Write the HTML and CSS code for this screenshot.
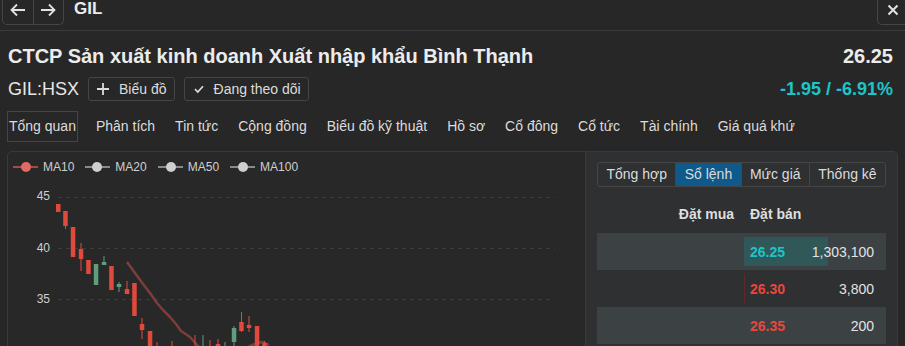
FILE: index.html
```html
<!DOCTYPE html>
<html lang="vi">
<head>
    <meta charset="UTF-8">
    <meta name="viewport" content="width=device-width, initial-scale=1.0">
    <title>GIL - CTCP Sản xuất kinh doanh Xuất nhập khẩu Bình Thạnh</title>
    <link rel="stylesheet" href="styles.css">
</head>
<body>

    <!-- thanh trên cùng -->
    <div class="topbar">
        <div class="nav">
            <button class="nav-btn" aria-label="Quay lại">
                <svg width="16" height="16" viewBox="0 0 16 16"><path d="M15 8H1.5M7 2.5 1.5 8 7 13.5" fill="none" stroke="currentColor" stroke-width="1.8"/></svg>
            </button>
            <button class="nav-btn" aria-label="Tiếp">
                <svg width="16" height="16" viewBox="0 0 16 16"><path d="M1 8h13.5M9 2.5 14.5 8 9 13.5" fill="none" stroke="currentColor" stroke-width="1.8"/></svg>
            </button>
        </div>
        <div class="symbol">GIL</div>
        <button class="close" aria-label="Đóng">
            <svg width="12" height="12" viewBox="0 0 12 12"><path d="M1.5 1.5l9 9M10.5 1.5l-9 9" stroke="currentColor" stroke-width="2"/></svg>
        </button>
    </div>

    <!-- thông tin mã -->
    <div class="header">
        <div class="title-row">
            <h1>CTCP Sản xuất kinh doanh Xuất nhập khẩu Bình Thạnh</h1>
            <div class="price">26.25</div>
        </div>
        <div class="meta-row">
            <div class="meta-left">
                <span class="ticker">GIL:HSX</span>
                <button class="btn">
                    <svg width="12" height="12" viewBox="0 0 12 12"><path d="M6 0v12M0 6h12" stroke="currentColor" stroke-width="1.8"/></svg>
                    Biểu đồ
                </button>
                <button class="btn btn-follow">
                    <svg width="10" height="10" viewBox="0 0 10 10"><path d="M1 5.2 3.8 8 9 2.2" fill="none" stroke="currentColor" stroke-width="1.7"/></svg>
                    Đang theo dõi
                </button>
            </div>
            <div class="change">-1.95 / -6.91%</div>
        </div>
    </div>

    <!-- tab -->
    <div class="tabs">
        <span class="tab active">Tổng quan</span>
        <span class="tab">Phân tích</span>
        <span class="tab">Tin tức</span>
        <span class="tab">Cộng đồng</span>
        <span class="tab">Biểu đồ kỹ thuật</span>
        <span class="tab">Hồ sơ</span>
        <span class="tab">Cổ đông</span>
        <span class="tab">Cổ tức</span>
        <span class="tab">Tài chính</span>
        <span class="tab">Giá quá khứ</span>
    </div>

    <div class="panels">
        <!-- biểu đồ nến -->
        <div class="chart-panel">
            <div class="legend">
                <span class="legend-item">
                    <svg width="25" height="12" viewBox="0 0 25 12"><path d="M0 6h25" stroke="#a54a47" stroke-width="2"/><circle cx="13" cy="6" r="5" fill="#e26a66"/></svg>
                    MA10
                </span>
                <span class="legend-item">
                    <svg width="25" height="12" viewBox="0 0 25 12"><path d="M0 6h25" stroke="#8a8a8a" stroke-width="2"/><circle cx="12" cy="6" r="5" fill="#cfcfcf"/></svg>
                    MA20
                </span>
                <span class="legend-item">
                    <svg width="25" height="12" viewBox="0 0 25 12"><path d="M0 6h25" stroke="#8a8a8a" stroke-width="2"/><circle cx="13" cy="6" r="5" fill="#cfcfcf"/></svg>
                    MA50
                </span>
                <span class="legend-item">
                    <svg width="25" height="12" viewBox="0 0 25 12"><path d="M0 6h25" stroke="#8a8a8a" stroke-width="2"/><circle cx="13" cy="6" r="5" fill="#cfcfcf"/></svg>
                    MA100
                </span>
            </div>
            <svg class="chart" width="577" height="180" viewBox="8 180 577 180">
                <g class="grid">
                    <line x1="58" y1="197.5" x2="555" y2="197.5"/>
                    <line x1="58" y1="248.5" x2="555" y2="248.5"/>
                    <line x1="58" y1="299.5" x2="555" y2="299.5"/>
                    <line x1="58" y1="350.5" x2="555" y2="350.5"/>
                </g>
                <g class="axis">
                    <text x="50" y="200">45</text>
                    <text x="50" y="252">40</text>
                    <text x="50" y="303">35</text>
                    <text x="50" y="355">30</text>
                </g>
                <g class="ma">
                    <polyline points="127,262 135,273 143,284 150,293 157,303 163,310 170,317 176,324 181,331 190,337 198,346 204,352"/>
                    <polyline points="244,349 250,346 257,343 263,342 269,345"/>
                </g>
                <!-- nến giảm -->
                <g class="down">
                    <rect x="56" y="204" width="4.5" height="8"/>
                    <line x1="65.5" y1="211" x2="65.5" y2="229"/>
                    <rect x="63.2" y="211" width="4.5" height="15"/>
                    <rect x="70.8" y="227" width="4.5" height="30"/>
                    <line x1="81" y1="243" x2="81" y2="271"/>
                    <rect x="78.8" y="249" width="4.5" height="10"/>
                    <rect x="86.2" y="260" width="4.5" height="14"/>
                    <rect x="109.2" y="266" width="4.5" height="24"/>
                    <line x1="127" y1="281" x2="127" y2="294"/>
                    <rect x="124.8" y="289" width="4.5" height="5"/>
                    <rect x="132.2" y="283" width="4.5" height="33"/>
                    <line x1="142" y1="318" x2="142" y2="339"/>
                    <rect x="139.8" y="324" width="4.5" height="6"/>
                    <rect x="147.8" y="331" width="4.5" height="30"/>
                    <line x1="157" y1="342" x2="157" y2="360"/>
                    <line x1="172" y1="341" x2="172" y2="360"/>
                    <line x1="195" y1="335" x2="195" y2="360"/>
                    <line x1="210" y1="340" x2="210" y2="360"/>
                    <line x1="218" y1="339" x2="218" y2="360"/>
                    <rect x="215.8" y="344" width="4.5" height="10"/>
                    <line x1="241.5" y1="312" x2="241.5" y2="332"/>
                    <rect x="239.2" y="322" width="4.5" height="9"/>
                    <line x1="249" y1="316" x2="249" y2="332"/>
                    <rect x="246.8" y="325" width="4.5" height="3"/>
                    <rect x="254.8" y="326" width="4.5" height="30"/>
                    <line x1="264.5" y1="341" x2="264.5" y2="360"/>
                    <rect x="262.2" y="343" width="4.5" height="10"/>
                </g>
                <!-- nến tăng -->
                <g class="up">
                    <rect x="93.8" y="264" width="4.5" height="21"/>
                    <line x1="104" y1="256" x2="104" y2="265"/>
                    <rect x="101.8" y="262" width="4.5" height="3"/>
                    <line x1="119" y1="282" x2="119" y2="292"/>
                    <rect x="116.8" y="284" width="4.5" height="3"/>
                    <line x1="203" y1="335" x2="203" y2="360"/>
                    <line x1="225" y1="342" x2="225" y2="360"/>
                    <line x1="234" y1="326" x2="234" y2="347"/>
                    <rect x="231.8" y="328" width="4.5" height="14"/>
                </g>
            </svg>
        </div>

        <!-- sổ lệnh -->
        <div class="book-panel">
            <div class="seg">
                <span class="seg-item">Tổng hợp</span>
                <span class="seg-item active">Sổ lệnh</span>
                <span class="seg-item">Mức giá</span>
                <span class="seg-item">Thống kê</span>
            </div>
            <div class="book-head">
                <span class="head-buy">Đặt mua</span>
                <span class="head-sell">Đặt bán</span>
            </div>
            <div class="book-row shade">
                <div class="buy"></div>
                <div class="sell">
                    <span class="sell-bar floor" style="width: 84px;"></span>
                    <span class="px floor-px">26.25</span>
                    <span class="vol">1,303,100</span>
                </div>
            </div>
            <div class="book-row">
                <div class="buy"></div>
                <div class="sell">
                    <span class="sell-bar ask" style="width: 1px;"></span>
                    <span class="px ask-px">26.30</span>
                    <span class="vol">3,800</span>
                </div>
            </div>
            <div class="book-row shade">
                <div class="buy"></div>
                <div class="sell">
                    <span class="px ask-px">26.35</span>
                    <span class="vol">200</span>
                </div>
            </div>
        </div>
    </div>

</body>
</html>
```

FILE: styles.css
```css
* {
    box-sizing: border-box;
}

body {
    margin: 0;
    background: #272727;
    color: #e4e4e4;
    font-family: "Liberation Sans", Arial, sans-serif;
    font-size: 14px;
    overflow: hidden;
}

button {
    font-family: inherit;
    cursor: pointer;
}

/* thanh trên cùng */
.topbar {
    display: flex;
    align-items: flex-start;
    height: 31px;
    border-bottom: 1px solid #3b3b3b;
}

.nav {
    display: flex;
    width: 62px;
    height: 29px;
    margin: -4px 0 0 2px;
    border: 1px solid #454545;
    border-top: none;
    border-radius: 0 0 5px 5px;
}

.nav-btn {
    flex: 1;
    display: flex;
    align-items: center;
    justify-content: center;
    padding: 0;
    background: none;
    border: none;
    color: #e2e2e2;
}

.nav-btn + .nav-btn {
    border-left: 1px solid #454545;
}

.symbol {
    margin-left: 10px;
    font-size: 17px;
    line-height: 18px;
    font-weight: bold;
    color: #ececec;
}

.close {
    display: flex;
    align-items: center;
    justify-content: center;
    width: 28px;
    height: 29px;
    margin: -4px 0 0 auto;
    padding: 0 0 0 3px;
    background: none;
    border: 1px solid #454545;
    border-top: none;
    border-right: none;
    border-radius: 0 0 0 5px;
    color: #e2e2e2;
}

/* thông tin mã */
.header {
    padding: 0 12px 0 8px;
}

.title-row,
.meta-row {
    display: flex;
    justify-content: space-between;
    align-items: center;
    height: 24px;
}

.title-row {
    margin-top: 13px;
}

.meta-row {
    margin-top: 9px;
}

h1 {
    margin: 0;
    font-size: 20px;
    line-height: 24px;
    font-weight: bold;
    color: #ececec;
}

.price {
    font-size: 20px;
    font-weight: bold;
    color: #ececec;
}

.meta-left {
    display: flex;
    align-items: center;
    gap: 9px;
}

.ticker {
    font-size: 18px;
    line-height: 24px;
    color: #e6e6e6;
}

.btn {
    display: flex;
    align-items: center;
    gap: 10px;
    height: 24px;
    padding: 0 7px 0 8px;
    background: none;
    border: 1px solid #454545;
    border-radius: 3px;
    color: #dcdcdc;
    font-size: 14px;
}

.btn-follow {
    padding-left: 9px;
}

.change {
    font-size: 18px;
    font-weight: bold;
    color: #1dc4c8;
}

/* tab */
.tabs {
    display: flex;
    gap: 16px;
    margin-top: 10px;
    padding-left: 7px;
}

.tab {
    padding: 0 1px;
    border: 1px solid transparent;
    line-height: 29px;
    color: #dcdcdc;
    white-space: nowrap;
}

.tab.active {
    border-color: #454545;
}

/* khung dưới */
.panels {
    display: flex;
    margin-top: 9px;
}

.chart-panel {
    width: 579px;
    height: 230px;
    margin-left: 7px;
    background: #282828;
    border: 1px solid #3a3a3a;
    border-radius: 5px 0 0 0;
}

.legend {
    display: flex;
    align-items: center;
    gap: 11px;
    height: 28px;
    padding: 1px 0 0 5px;
}

.legend-item {
    display: flex;
    align-items: center;
    gap: 5px;
    font-size: 12px;
    color: #cfcfcf;
}

.chart {
    display: block;
}

.grid line {
    stroke: #3c3c3c;
    stroke-width: 1;
    stroke-dasharray: 4 4;
}

.axis text {
    fill: #cfcfcf;
    font-size: 12px;
    text-anchor: end;
}

.ma polyline {
    fill: none;
    stroke: #7b3e3b;
    stroke-width: 2.5;
    stroke-linejoin: round;
}

.down rect {
    fill: #e04a3c;
}

.down line {
    stroke: #e04a3c;
    stroke-width: 1;
}

.up rect {
    fill: #5f9d7d;
}

.up line {
    stroke: #5f9d7d;
    stroke-width: 1;
}

.book-panel {
    width: 312px;
    height: 230px;
    padding: 10px 11px 0;
    background: #2e3032;
    border: 1px solid #3a3a3a;
    border-left: none;
    border-radius: 0 5px 0 0;
}

.seg {
    display: flex;
    height: 25px;
    border: 1px solid #454545;
    border-radius: 3px;
    overflow: hidden;
}

.seg-item {
    flex: 1 1 auto;
    padding: 0 8px;
    line-height: 23px;
    color: #dcdcdc;
    text-align: center;
    white-space: nowrap;
}

.seg-item + .seg-item {
    border-left: 1px solid #454545;
}

.seg-item.active {
    background: #0f5a8b;
}

.book-head,
.book-row {
    display: grid;
    grid-template-columns: 147px 142px;
}

.book-head {
    height: 38px;
    margin-top: 8px;
    align-items: center;
    font-weight: bold;
    color: #dedede;
}

.head-buy {
    text-align: right;
    padding-right: 10px;
}

.head-sell {
    padding-left: 6px;
}

.book-row {
    height: 37px;
}

.book-row.shade {
    background: #3c4244;
}

.sell {
    position: relative;
    display: flex;
    justify-content: space-between;
    align-items: center;
    padding: 0 12px 0 6px;
}

.sell-bar {
    position: absolute;
    left: 0;
    top: 4px;
    bottom: 4px;
}

.sell-bar.floor {
    background: #305858;
}

.sell-bar.ask {
    background: #5c2b28;
}

.px,
.vol {
    position: relative;
}

.px {
    font-weight: bold;
}

.floor-px {
    color: #1dc4c8;
}

.ask-px {
    color: #e8473b;
}

.vol {
    color: #e2e2e2;
}
```
